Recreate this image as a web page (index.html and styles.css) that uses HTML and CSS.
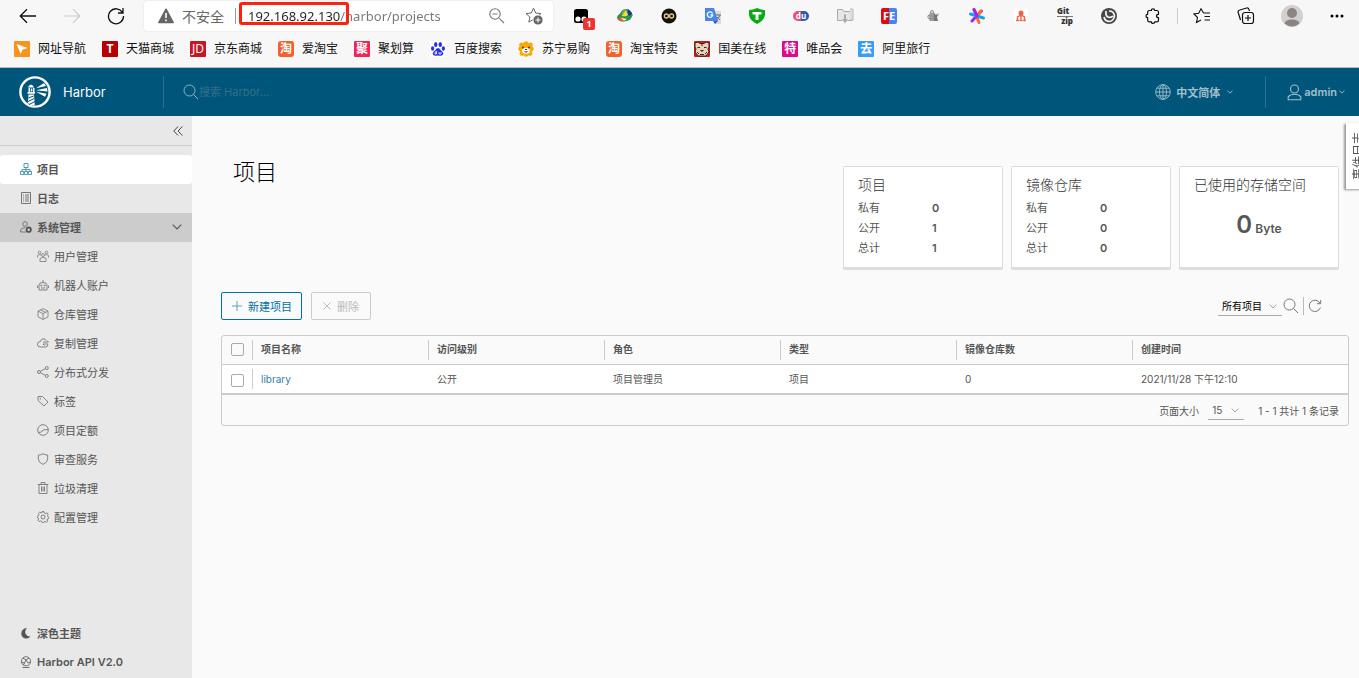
FILE: index.html
```html
<!DOCTYPE html>
<html lang="zh-CN">
<head>
  <meta charset="UTF-8">
  <meta name="viewport" content="width=device-width, initial-scale=1.0">
  <title>Harbor</title>
  <link rel="stylesheet" href="styles.css">
</head>
<body>
  <!-- 浏览器工具栏 -->
  <div class="browser">
    <div class="toolbar">
      <button class="tool" aria-label="后退"><svg width="18" height="16" viewBox="0 0 18 16"><path d="M17 8H1.500M8 1.200L1.200 8L8 14.800" fill="none" stroke="#111" stroke-width="1.300"/></svg></button>
      <button class="tool" aria-label="前进"><svg width="18" height="16" viewBox="0 0 18 16"><path d="M1 8h15.500M10 1.200L16.800 8L10 14.800" fill="none" stroke="#ccc" stroke-width="1.200"/></svg></button>
      <button class="tool" aria-label="刷新"><svg width="18" height="18" viewBox="0 0 18 18"><path d="M15.500 5.500A7.500 7.500 0 1 0 16.500 9M16 1v5h-5" fill="none" stroke="#111" stroke-width="1.300"/></svg></button>
      <div class="address">
        <svg width="16" height="16" viewBox="0 0 16 16"><path d="M8 1.200L15.200 14.500H.8z" fill="#666" stroke="#666" stroke-width="1.500" stroke-linejoin="round"/><path d="M8 5v5M8 11.500v1.800" stroke="#fff" stroke-width="1.600"/></svg>
        <span class="unsafe">不安全</span>
        <div class="url">
          <input class="url_input" type="text" aria-label="地址" value="192.168.92.130/harbor/projects">
          <i class="mark"></i>
        </div>
        <button class="mini" aria-label="缩小"><svg width="16" height="16" viewBox="0 0 16 16"><path d="M10.300 10.300L15 15M3.500 6h5" stroke="#777" stroke-width="1.100"/><circle cx="6" cy="6" r="5.200" fill="none" stroke="#777" stroke-width="1.100"/></svg></button>
        <button class="mini" aria-label="收藏"><svg width="18" height="18" viewBox="0 0 18 18"><path d="M8.500 1.200l2.200 4.800 5.300.6-3.900 3.500 1.100 5-4.700-2.600-4.700 2.600 1.100-5L1 6.600 6.300 6z" fill="none" stroke="#666" stroke-width="1"/><circle cx="13" cy="13" r="5" fill="#666" stroke="#fff" stroke-width=".8"/><path d="M13 10.500v5M10.500 13h5" stroke="#fff" stroke-width="1.100"/></svg></button>
      </div>
      <button class="tool has_badge" aria-label="脚本扩展"><svg width="16" height="16" viewBox="0 0 16 16"><rect x="1" y="1" width="14" height="14" rx="2.500" fill="#000"/><circle cx="5" cy="11" r="2.600" fill="#fff"/><circle cx="11" cy="11" r="2.600" fill="#fff"/></svg><b class="badge">1</b></button>
      <button class="tool" aria-label="下载扩展"><svg width="18" height="18" viewBox="0 0 18 18"><circle cx="10" cy="8" r="6" fill="#2c6fb5"/><path d="M10 2q-5 1-5 7l5 1 1-4z" fill="#6fb53b"/><path d="M10 3l2 5-4 3-2-2z" fill="#f4dc3d"/><path d="M12 2l4 4-2 4-2-3z" fill="#1b3c70"/><path d="M1 11q0-3 4-5l1 3q6 1 11-2-1 5-7 7-7 2-9-3z" fill="#2a9a40"/><path d="M2 12l4-2 3 3q-5 3-7-1z" fill="#e5603a"/><path d="M5 11l6 1-3 1.500z" fill="#fff"/></svg></button>
      <button class="tool" aria-label="无限扩展"><svg width="16" height="16" viewBox="0 0 16 16"><circle cx="8" cy="8" r="7.500" fill="#151310"/><circle cx="5.400" cy="8" r="2" fill="none" stroke="#eac48c" stroke-width="1.300"/><circle cx="10.600" cy="8" r="2" fill="none" stroke="#eac48c" stroke-width="1.300"/></svg></button>
      <button class="tool" aria-label="翻译"><svg width="18" height="18" viewBox="0 0 18 18"><path d="M8 4h9v13H11z" fill="#dadada"/><path d="M1 1h9l4 13H1z" fill="#4787ec"/><path d="M9 14h5l-3 3z" fill="#315eae"/><path d="M8.500 6.500A2.700 2.700 0 1 0 8.700 8H6.500" fill="none" stroke="#fff" stroke-width="1.300"/><path d="M12 8h5M14 7v1M16 8q-1 4-4 5M13 10l3 3" stroke="#627782" fill="none"/></svg></button>
      <button class="tool" aria-label="T 扩展"><svg width="16" height="16" viewBox="0 0 16 16"><path d="M0 2q4 0 8-2 4 2 8 2v5q-1 6-8 9-7-3-8-9z" fill="#0aaa15"/><path d="M3.500 4h9v2.400h-3V12h-3V6.400h-3z" fill="#fff"/></svg></button>
      <button class="tool" aria-label="网盘"><span class="du">du</span></button>
      <button class="tool" aria-label="文件下载"><svg width="18" height="18" viewBox="0 0 18 18"><path d="M1.500 2.500h5l1.500 2h8.500v9h-15z" fill="#e6e6e6" stroke="#aaa"/><path d="M14 2h3v11h-3" fill="#ddd" stroke="#bbb"/><path d="M7.500 7h3v5h2.500l-4 4.500-4-4.500h2.500z" fill="#aaa" stroke="#f5f5f5" stroke-width=".6"/></svg></button>
      <button class="tool" aria-label="前端助手"><span class="fe">FE</span></button>
      <button class="tool" aria-label="茶壶扩展"><svg width="14" height="14" viewBox="0 0 14 14"><path d="M4 3q0-2 2-2t2 2l1 2v7H4L3 8z" fill="#999"/><path d="M8 5l4 1-1 2 1 4H8z" fill="#777"/><path d="M4 6q-3 0-2 2.500t3 2" fill="none" stroke="#888"/><path d="M9 5l4-.5-.5 2z" fill="#aaa"/><circle cx="6" cy="3" r="1" fill="#ddd"/></svg></button>
      <button class="tool" aria-label="星形扩展"><svg width="18" height="18" viewBox="0 0 18 18"><g stroke-width="3" stroke-linecap="round"><path d="M6 2.500L11 15.500" stroke="#ff6b26"/><path d="M13.500 4L4 14" stroke="#a123ef"/><path d="M9 9l4-5" stroke="#ff6b26"/><path d="M2.500 7L15.500 11" stroke="#11a5ee"/><path d="M6 2.500L9 9" stroke="#a123ef"/></g></svg></button>
      <button class="tool" aria-label="结构扩展"><svg width="14" height="14" viewBox="0 0 14 14"><rect width="14" height="14" rx="2" fill="#fff"/><circle cx="7" cy="4" r="2.500" fill="#ee6448"/><path d="M7 5v7M3.500 11V8L7 6l3.500 2v3M2 11.500h3M5.500 11.500h3M9 11.500h3" stroke="#ee6448" fill="none" stroke-width="1.400"/></svg></button>
      <button class="tool gitzip" aria-label="GitZip"><span>Git</span><i></i><span>zip</span></button>
      <button class="tool" aria-label="圆形扩展"><svg width="16" height="16" viewBox="0 0 16 16"><circle cx="8" cy="8" r="8" fill="#474747"/><path d="M5 3q-.5 5 2 6 3 1 5-1M8 3q5 0 5.500 5-.5 4.500-5 5.500Q4 13.500 3 9" fill="none" stroke="#f7f7f7" stroke-width="1.700"/></svg></button>
      <button class="tool" aria-label="扩展"><svg width="16" height="16" viewBox="0 0 16 16"><path d="M4.500 2.500h2q-.2-1.700 1.500-1.700t1.700 1.700h2q1.800 0 1.800 1.800v2q-2 0-2 1.700t2 1.700v2.500q0 1.600-1.800 1.600h-2q0 1.600-1.700 1.600t-1.500-1.600h-2q-1.800 0-1.800-1.600v-2.500Q1 9.700 1 8t1.700-1.700v-2q0-1.800 1.800-1.800z" fill="none" stroke="#111" stroke-width="1.200" stroke-linejoin="round"/></svg></button>
      <i class="tool_line"></i>
      <button class="tool" aria-label="收藏夹"><svg width="18" height="16" viewBox="0 0 18 16"><path d="M10.500 5L8 .8 5.700 5.300 1 6l3.500 3.500-1 5L8 12M10.500 5H17M11.500 8.500H17M11.500 12H17" fill="none" stroke="#111" stroke-width="1.100"/></svg></button>
      <button class="tool" aria-label="集锦"><svg width="18" height="18" viewBox="0 0 18 18"><path d="M3.500 13L1.200 5.500q-.5-2 1.500-2.500l7-2q1.800-.3 2.300 1.500L12.500 4" fill="none" stroke="#111" stroke-width="1.200"/><rect x="5.500" y="5.500" width="11" height="11" rx="2.500" fill="#f7f7f7" stroke="#111" stroke-width="1.200"/><path d="M11 8v6M8 11h6" stroke="#111" stroke-width="1.200"/></svg></button>
      <button class="tool avatar" aria-label="用户"><svg width="22" height="22" viewBox="0 0 22 22"><circle cx="11" cy="11" r="11" fill="#d2d0ce"/><circle cx="11" cy="8" r="5" fill="#8a8583"/><path d="M3.500 18.500q1-4 7.500-4t7.500 4q-7.500 6-15 0z" fill="#8a8583"/></svg></button>
      <button class="tool" aria-label="更多"><svg width="14" height="4" viewBox="0 0 14 4"><circle cx="2" cy="2" r="1.500"/><circle cx="7" cy="2" r="1.500"/><circle cx="12" cy="2" r="1.500"/></svg></button>
    </div>
    <div class="bookmarks">
      <a href="#"><svg width="16" height="16" viewBox="0 0 16 16"><rect width="16" height="16" rx="1" fill="#f7941e"/><path d="M2.500 3l11 4-5 1.800L6.700 13z" fill="#fff"/></svg>网址导航</a>
      <a href="#"><span class="fav tmall">T</span>天猫商城</a>
      <a href="#"><span class="fav jd">JD</span>京东商城</a>
      <a href="#"><span class="fav taobao">淘</span>爱淘宝</a>
      <a href="#"><span class="fav ju">聚</span>聚划算</a>
      <a href="#"><svg width="16" height="16" viewBox="0 0 16 16"><rect width="16" height="16" fill="#fff"/><g fill="#2932e1"><ellipse cx="5.700" cy="3.500" rx="1.700" ry="2.500"/><ellipse cx="10.300" cy="3.500" rx="1.700" ry="2.500"/><ellipse cx="2.600" cy="7.500" rx="1.600" ry="2.200"/><ellipse cx="13.400" cy="7.500" rx="1.600" ry="2.200"/><path d="M8 7q2 0 3 2.500 3 2 2 4-1 2-5 1-4 1-5-1-1-2 2-4Q6 7 8 7z"/></g><path d="M6.500 10v3H5v-2h1.500M9 11v2h2v-2" fill="none" stroke="#fff" stroke-width=".8"/></svg>百度搜索</a>
      <a href="#"><svg width="16" height="16" viewBox="0 0 16 16"><g fill="#f9a90b"><circle cx="8" cy="8" r="6.500"/><circle cx="8" cy="2.700" r="2.400"/><circle cx="3.500" cy="4" r="2.400"/><circle cx="12.500" cy="4" r="2.400"/><circle cx="2.600" cy="8" r="2.400"/><circle cx="13.400" cy="8" r="2.400"/><circle cx="4" cy="12.500" r="2.400"/><circle cx="12" cy="12.500" r="2.400"/><circle cx="8" cy="13.500" r="2.300"/></g><ellipse cx="8" cy="9.700" rx="4" ry="3" fill="#fff"/><circle cx="5" cy="6.500" r=".9" fill="#423011"/><circle cx="11" cy="6.500" r=".9" fill="#423011"/><path d="M7 8.500h2M6.500 10.500q1.500 1.200 3 0" stroke="#423011" fill="none"/></svg>苏宁易购</a>
      <a href="#"><span class="fav taobao">淘</span>淘宝特卖</a>
      <a href="#"><svg width="16" height="16" viewBox="0 0 16 16"><rect width="16" height="16" rx="1" fill="#d7141a"/><path d="M1 2l3-1 2 1.500h4L12 1l3 1v4l-1 2 1 3-3 4H4l-3-4 1-3-1-2z" fill="#e4d3bd" stroke="#41231b"/><path d="M3.500 6.500h2.500M10 6.500h2.500M3 11l2 2M13 11l-2 2M6 13.500h4M7 4h2" fill="none" stroke="#41231b"/><path d="M6 9h4l-2 2z" fill="#41231b"/></svg>国美在线</a>
      <a href="#"><span class="fav te">特</span>唯品会</a>
      <a href="#"><span class="fav qu">去</span>阿里旅行</a>
    </div>
  </div>

  <!-- Harbor 头部 -->
  <header class="header">
    <a class="brand" href="#">
      <svg width="32" height="32" viewBox="0 0 32 32"><circle cx="16" cy="16" r="14.600" fill="none" stroke="#fff" stroke-width="2.400"/><path d="M9 11.500q.5-2 3-3 2.500 1 3 3zM9.500 12H11v4H9.500zM14 12h1.500v4H14zM8.500 16h7.500v1.800H8.500zM9.500 18.500h5.500l.8 10.500q-4 1-7-2z" fill="#fff"/><path d="M11.800 12.500h1.500v3h-1.500z" fill="#fff"/><path d="M9.200 22l5.500-2M9 25.500l6-3M10 28.500l6-3" stroke="#00567a"/><path d="M17 12.300L25 7l2 3zM17 14.200l11-2.200.5 3.500zM17 15.800l10.500 2-1.500 3z" fill="#fff"/></svg>
      <span>Harbor</span>
    </a>
    <form class="search">
      <label for="search"><svg width="16" height="16" viewBox="0 0 16 16"><circle cx="6.500" cy="6.500" r="5.500" fill="none" stroke="#8fb5c7"/><path d="M10.500 10.500L15 15" stroke="#8fb5c7"/></svg></label>
      <input id="search" type="text" placeholder="搜索 Harbor..." aria-label="搜索">
    </form>
    <button class="lang">
      <svg width="16" height="16" viewBox="0 0 16 16"><g fill="none" stroke="#a0bfcd" stroke-width=".9"><circle cx="8" cy="8" r="7.300"/><ellipse cx="8" cy="8" rx="3.500" ry="7.300"/><path d="M8 .7v14.600M.7 8h14.600M2 4.200h12M2 11.800h12"/></g></svg>
      <span>中文简体</span>
      <svg class="arrow" width="6" height="4" viewBox="0 0 6 4"><path d="M.4.500L3 3.200 5.600.5" fill="none" stroke="#a0bfcd" stroke-width=".9"/></svg>
    </button>
    <button class="user">
      <svg width="15" height="17" viewBox="0 0 15 17"><g fill="none" stroke="#a0bfcd" stroke-width="1.100"><circle cx="7.500" cy="5" r="4"/><path d="M1.200 15.800v-3q2-2.600 6.300-2.600t6.300 2.600v3z"/></g></svg>
      <span>admin</span>
      <svg width="6" height="4" viewBox="0 0 6 4"><path d="M.4.500L3 3.200 5.600.5" fill="none" stroke="#a0bfcd" stroke-width=".9"/></svg>
    </button>
  </header>

  <div class="container">
    <!-- 左侧导航 -->
    <nav class="sidebar">
      <div class="collapse">
        <button aria-label="折叠"><svg width="10" height="10" viewBox="0 0 10 10"><path d="M5 .5L.8 5 5 9.500M9.300.5L5.100 5l4.200 4.500" fill="none" stroke="#444"/></svg></button>
      </div>
      <div class="menu">
        <a class="item active" href="#"><svg width="12" height="12" viewBox="0 0 12 12"><path d="M4 .5h4v4H4zM.5 8.500h3.200v3H.5zM8.300 8.500h3.200v3H8.300zM4.400 8.500h3.200v3H4.400zM6 4.500v4M2 8.500v-2h8v2" fill="none" stroke="#3b8eb5" stroke-width=".9"/></svg>项目</a>
        <a class="item" href="#"><svg width="12" height="12" viewBox="0 0 12 12"><path d="M1.500.5h9v11h-9z" fill="none" stroke="#777"/><path d="M3 3h1M5 3h4M3 5h1M5 5h4M3 7h1M5 7h4M3 9h1M5 9h4" stroke="#777"/></svg>日志</a>
        <a class="item open" href="#"><svg width="12" height="12" viewBox="0 0 12 12"><circle cx="5" cy="3" r="2.300" fill="none" stroke="#777"/><path d="M6 11H.7V8.500Q2.200 6.700 5 6.700" fill="none" stroke="#777"/><circle cx="8.700" cy="8.700" r="2.200" fill="none" stroke="#555" stroke-width="1.800"/></svg><span>系统管理</span><svg class="chevron" width="10" height="6" viewBox="0 0 10 6"><path d="M.7.700L5 5 9.300.7" fill="none" stroke="#555" stroke-width="1.100"/></svg></a>
        <div class="submenu">
          <a class="item" href="#"><svg width="12" height="12" viewBox="0 0 12 12"><g fill="none" stroke="#777" stroke-width=".8"><circle cx="6" cy="5" r="1.500"/><circle cx="2.500" cy="2.500" r="1.300"/><circle cx="9.500" cy="2.500" r="1.300"/><path d="M3 11.500v-3q3-2.500 6 0v3zM.5 7.500v-2Q2 4 4 5M11.500 7.500v-2Q10 4 8 5"/></g></svg>用户管理</a>
          <a class="item" href="#"><svg width="12" height="12" viewBox="0 0 12 12"><g fill="none" stroke="#777" stroke-width=".9"><path d="M6 1v2M2 11V6q0-2.500 4-2.500T10 6v5zM.5 6.500v2.500M11.500 6.500v2.500M4 9h4"/><circle cx="4.300" cy="6.500" r=".6"/><circle cx="7.700" cy="6.500" r=".6"/></g></svg>机器人账户</a>
          <a class="item" href="#"><svg width="12" height="12" viewBox="0 0 12 12"><path d="M6 .6l5 2.500v5.800L6 11.400 1 8.900V3.100zM1 3.100l5 2.500 5-2.500M6 5.600v5.800M3.500 1.800l5 2.600" fill="none" stroke="#777" stroke-width=".8"/></svg>仓库管理</a>
          <a class="item" href="#"><svg width="12" height="12" viewBox="0 0 12 12"><path d="M9 3.500Q8.500 1.500 6 1.800 3.800 2 3.500 4.500.5 4.500.5 7.200T3 10h5.500q2.300 0 2.300-2.500M6 5h5.500L10 3.500M11 7H6l1.500 1.500" fill="none" stroke="#777" stroke-width=".9"/></svg>复制管理</a>
          <a class="item" href="#"><svg width="12" height="12" viewBox="0 0 12 12"><g fill="none" stroke="#777" stroke-width=".9"><circle cx="2" cy="6" r="1.500"/><circle cx="9.800" cy="2" r="1.500"/><circle cx="9.800" cy="10" r="1.500"/><path d="M3.400 5.300l5-2.600M3.400 6.700l5 2.600"/></g></svg>分布式分发</a>
          <a class="item" href="#"><svg width="12" height="12" viewBox="0 0 12 12"><path d="M1 1.500h4.500L11 7 7 11 1 5.500z" fill="none" stroke="#777" stroke-width=".9" stroke-linejoin="round"/><circle cx="3.300" cy="3.700" r=".7" fill="#777"/></svg>标签</a>
          <a class="item" href="#"><svg width="12" height="12" viewBox="0 0 12 12"><circle cx="6" cy="6" r="5.300" fill="none" stroke="#777" stroke-width=".9"/><path d="M1 8.500l3.500-.5L6 6l5-.5" fill="none" stroke="#777" stroke-width=".9"/></svg>项目定额</a>
          <a class="item" href="#"><svg width="12" height="12" viewBox="0 0 12 12"><path d="M6 .7q2 1.400 4.700 1.400V6Q10.500 9.500 6 11.400 1.500 9.500 1.300 6V2.100Q4 2.100 6 .7z" fill="none" stroke="#777" stroke-width=".9"/></svg>审查服务</a>
          <a class="item" href="#"><svg width="12" height="12" viewBox="0 0 12 12"><path d="M.7 2.500h10.600M4 2.500v-2h4v2M2 2.500v9h8v-9M4.500 4.500v5M6 4.500v5M7.500 4.500v5" fill="none" stroke="#777" stroke-width=".9"/></svg>垃圾清理</a>
          <a class="item" href="#"><svg width="12" height="12" viewBox="0 0 12 12"><path d="M5 .6h2l.4 1.500 1 .5 1.500-.8 1.300 1.400-.8 1.400.4 1 1 .4v1.500l-1.400.5-.4 1 .7 1.300-1.300 1.200L8 10.300l-.9.300-.5 1H5l-.4-1.300-1-.4-1.500.7-1.200-1.400.7-1.400-.4-1-1-.3V5.100l1.400-.5.4-1-.6-1.300 1.300-1.200 1.400.7 1-.3z" fill="none" stroke="#777" stroke-width=".9"/><circle cx="6" cy="6" r="2" fill="none" stroke="#777" stroke-width=".9"/></svg>配置管理</a>
        </div>
      </div>
      <div class="menu_bottom">
        <button class="item"><svg width="12" height="12" viewBox="0 0 12 12"><path d="M7 1Q3.500 5 6.500 8 8 9.600 10.500 9.500 8.500 12 5.500 11.500 1.500 10.700 1.300 6.500 1.500 1.500 7 1z" fill="#555"/></svg>深色主题</button>
        <a class="item" href="#"><svg width="12" height="12" viewBox="0 0 12 12"><g fill="none" stroke="#666" stroke-width=".9"><circle cx="6" cy="5.300" r="4.600"/><path d="M3 2l3 2 3-2M1.500 6l3 1 1.500-3 2 3 2.500-1M4.500 7l-1 2M2.500 11.500h7"/></g></svg>Harbor API V2.0</a>
      </div>
    </nav>

    <!-- 内容区 -->
    <main class="content">
      <div class="top">
        <h2>项目</h2>
        <div class="cards">
          <div class="card">
            <h3>项目</h3>
            <dl>
              <dt>私有</dt><dd>0</dd>
              <dt>公开</dt><dd>1</dd>
              <dt>总计</dt><dd>1</dd>
            </dl>
          </div>
          <div class="card">
            <h3>镜像仓库</h3>
            <dl>
              <dt>私有</dt><dd>0</dd>
              <dt>公开</dt><dd>0</dd>
              <dt>总计</dt><dd>0</dd>
            </dl>
          </div>
          <div class="card">
            <h3>已使用的存储空间</h3>
            <p class="storage"><b>0</b> Byte</p>
          </div>
        </div>
      </div>

      <div class="actions">
        <button class="btn"><svg width="10" height="10" viewBox="0 0 10 10"><path d="M5 0v10M0 5h10" stroke="#5ba3c3"/></svg>新建项目</button>
        <button class="btn" disabled><svg width="8" height="8" viewBox="0 0 8 8"><path d="M.5.500l7 7M7.500.5l-7 7" stroke="#bbb"/></svg>删除</button>
        <div class="filter">
          <div class="select">
            <select aria-label="项目类型"><option>所有项目</option></select>
            <svg width="8" height="5" viewBox="0 0 8 5"><path d="M.7.600L4 4 7.300.6" fill="none" stroke="#999" stroke-width=".9"/></svg>
          </div>
          <button class="icon_btn" aria-label="搜索项目"><svg width="16" height="16" viewBox="0 0 16 16"><circle cx="6.500" cy="6.500" r="5.500" fill="none" stroke="#777"/><path d="M10.500 10.500L15 15" stroke="#777"/></svg></button>
          <button class="icon_btn refresh" aria-label="刷新列表"><svg width="14" height="14" viewBox="0 0 14 14"><path d="M12 4.200A5.700 5.700 0 1 0 12.400 8.500M12.700 1v3.700H9" fill="none" stroke="#777"/></svg></button>
        </div>
      </div>

      <div class="datagrid">
        <table>
          <thead>
            <tr>
              <th class="check"><input type="checkbox" aria-label="全选"></th>
              <th><div>项目名称</div></th>
              <th><div>访问级别</div></th>
              <th><div>角色</div></th>
              <th><div>类型</div></th>
              <th><div>镜像仓库数</div></th>
              <th class="last"><div>创建时间</div></th>
            </tr>
          </thead>
          <tbody>
            <tr>
              <td class="check"><input type="checkbox" aria-label="选择 library"></td>
              <td class="name"><div><a href="#">library</a></div></td>
              <td>公开</td>
              <td>项目管理员</td>
              <td>项目</td>
              <td>0</td>
              <td>2021/11/28 下午12:10</td>
            </tr>
          </tbody>
        </table>
        <div class="pagination">
          <label for="size">页面大小</label>
          <div class="select size">
            <select id="size"><option>15</option></select>
            <svg width="8" height="5" viewBox="0 0 8 5"><path d="M.7.600L4 4 7.300.6" fill="none" stroke="#999" stroke-width=".9"/></svg>
          </div>
          <span>1 - 1 共计 1 条记录</span>
        </div>
      </div>
    </main>
    <button class="event_tab">事件日志</button>
  </div>
</body>
</html>
```
FILE: styles.css
```css
*{
  margin: 0;
  padding: 0;
  box-sizing: border-box;
}
body{
  display: flex;
  flex-direction: column;
  height: 100vh;
  overflow: hidden;
  background-color: #fafafa;
  color: #565656;
  font-family: Inter, "Noto Sans CJK SC", sans-serif;
  font-size: 11px;
}
a{
  color: inherit;
  text-decoration: none;
}
button,input,select{
  border: 0;
  outline: none;
  background: none;
  color: inherit;
  font: inherit;
}
i{
  font-style: normal;
}
svg{
  display: block;
  flex-shrink: 0;
}

/* 浏览器工具栏 */
.browser{
  flex-shrink: 0;
  height: 68px;
  border-bottom: 1px solid #b8bcc0;
  background-color: #f7f7f7;
  font-family: "Noto Sans", "Noto Sans CJK SC", sans-serif;
}
.toolbar{
  display: flex;
  align-items: center;
  height: 32px;
  padding-left: 6px;
}
.tool{
  display: flex;
  flex: 0 0 44px;
  align-items: center;
  justify-content: center;
  height: 32px;
}
.avatar{
  flex-basis: 47px;
}
.has_badge{
  position: relative;
}
.badge{
  position: absolute;
  left: 24px;
  top: 18px;
  width: 12px;
  height: 12px;
  border-radius: 2px;
  background-color: #e33;
  color: #fff;
  font-size: 9px;
  line-height: 12px;
}
.tool_line{
  width: 1px;
  height: 16px;
  margin: 0 2px;
  background-color: #ccc;
}
.du{
  width: 16px;
  border-radius: 5px;
  background: linear-gradient(to right, #ec4c74 50%, #2760ae 50%);
  color: #fff;
  font-size: 8px;
  font-weight: 700;
  line-height: 10px;
}
.fe{
  width: 16px;
  border-radius: 2px;
  background: linear-gradient(to right, #e20b0b 50%, #4385f5 50%);
  color: #fff;
  font-size: 11px;
  font-weight: 700;
  line-height: 16px;
}
.gitzip{
  flex-direction: column;
  align-items: stretch;
  padding: 0 14px;
  color: #333;
  font-family: "Open Sans", sans-serif;
  font-size: 8px;
  font-weight: 800;
  line-height: 8px;
}
.gitzip span:first-child{
  text-align: left;
}
.gitzip span:last-child{
  text-align: right;
}
.gitzip i{
  height: 1px;
  margin-top: 1px;
  background-color: #777;
}
.address{
  display: flex;
  flex: 1;
  align-items: center;
  height: 30px;
  margin: 0 6px;
  padding: 0 10px 0 14px;
  border-radius: 4px;
  background-color: #fff;
  box-shadow: 0 0 2px #ddd;
}
.unsafe{
  margin: 0 11px 0 8px;
  color: #666;
  font-size: 14px;
  white-space: nowrap;
}
.url{
  position: relative;
  flex: 1;
  border-left: 1px solid #999;
}
/* 主机名深色，路径灰色 */
.url_input{
  display: block;
  width: 100%;
  height: 16px;
  padding-left: 12px;
  background: linear-gradient(to right, #222 104px, #777 104px);
  background-clip: text;
  -webkit-text-fill-color: transparent;
  color: #555;
  font-size: 13px;
}
.mark{
  position: absolute;
  left: 3px;
  top: -6px;
  width: 110px;
  height: 23px;
  border: 3px solid #ff2010;
  border-radius: 3px;
}
.mini{
  margin-left: 20px;
}
.bookmarks{
  display: flex;
  gap: 16px;
  padding: 8px 14px;
  color: #111;
  font-size: 12px;
  line-height: 18px;
}
.bookmarks a{
  display: flex;
  align-items: center;
  gap: 8px;
  white-space: nowrap;
}
.fav{
  width: 16px;
  height: 16px;
  border-radius: 1px;
  color: #fff;
  font-size: 12px;
  font-weight: 700;
  line-height: 16px;
  text-align: center;
}
.tmall{
  background-color: #b80000;
}
.jd{
  background-color: #c91623;
  font-weight: 400;
}
.taobao{
  border-radius: 3px;
  background-color: #f4602a;
}
.ju{
  background-color: #f02458;
}
.te{
  background-color: #dd0b8c;
}
.qu{
  background-color: #3b9cf5;
}

/* Harbor 头部 */
.header{
  display: flex;
  flex-shrink: 0;
  align-items: center;
  height: 48px;
  background-color: #00567a;
  color: #a0bfcd;
}
.brand{
  display: flex;
  align-items: center;
  gap: 12px;
  width: 163px;
  padding-left: 19px;
  color: #fafafa;
  font-size: 13px;
}
.search{
  display: flex;
  flex: 1;
  align-items: center;
  height: 32px;
  padding-left: 19px;
  border-left: 1px solid #2b7290;
}
.search input{
  width: 200px;
  font-size: 11px;
}
.search input::placeholder{
  color: #326e89;
}
.lang,.user{
  display: flex;
  align-items: center;
  height: 32px;
  font-weight: 600;
}
.lang{
  gap: 5px;
  padding-right: 32px;
}
.lang .arrow{
  margin-left: 2px;
}
.user{
  gap: 2px;
  padding: 0 14px 0 21px;
  border-left: 1px solid #2b7290;
}

.container{
  position: relative;
  display: flex;
  flex: 1;
  min-height: 0;
}
/* 左侧导航 */
.sidebar{
  display: flex;
  flex: 0 0 192px;
  flex-direction: column;
  background-color: #e8e8e8;
}
.collapse{
  display: flex;
  justify-content: flex-end;
  height: 30px;
  padding-right: 9px;
  border-bottom: 1px solid #ccc;
}
.menu{
  margin-top: 9px;
}
.item{
  display: flex;
  align-items: center;
  gap: 5px;
  width: 100%;
  height: 29px;
  padding: 0 0 2px 20px;
  font-weight: 600;
}
.item.active{
  border-radius: 3px;
  background-color: #fff;
}
.item.open{
  background-color: #ccc;
}
.item .chevron{
  margin: 0 10px 0 auto;
}
.submenu .item{
  padding-left: 37px;
  font-weight: 400;
}
.menu_bottom{
  margin-top: auto;
  padding-bottom: 1px;
}

/* 内容区 */
.content{
  flex: 1;
  padding: 50px 10px 0 29px;
}
.top{
  display: flex;
  justify-content: space-between;
  padding: 0 10px 0 12px;
}
.top h2{
  margin-top: -10px;
  color: #000;
  font-size: 22px;
  font-weight: 300;
  line-height: 32px;
}
.cards{
  display: flex;
  gap: 8px;
}
.card{
  width: 160px;
  height: 104px;
  padding: 8px 14px;
  border: 1px solid #ddd;
  border-bottom-width: 3px;
  border-radius: 2px;
  background-color: #fff;
}
.card h3{
  color: #333;
  font-size: 14px;
  font-weight: 300;
  line-height: 20px;
  white-space: nowrap;
}
.card dl{
  display: grid;
  grid-template-columns: 74px 1fr;
  margin-top: 3px;
  line-height: 20px;
}
.card dd{
  font-weight: 600;
}
.storage{
  margin-top: 14px;
  font-size: 12px;
  font-weight: 600;
  line-height: 32px;
  text-align: center;
}
.storage b{
  font-size: 24px;
  font-weight: 600;
}
.actions{
  display: flex;
  align-items: center;
  gap: 9px;
  margin-top: 22px;
}
.btn{
  display: flex;
  align-items: center;
  gap: 6px;
  height: 28px;
  padding: 0 9px 0 10px;
  border: 1px solid #0072a3;
  border-radius: 2px;
  color: #0072a3;
}
.btn:disabled{
  padding: 0 11px;
  border-color: #ccc;
  color: #bbb;
}
.filter{
  display: flex;
  align-items: center;
  margin-left: auto;
  padding-right: 27px;
}
.select{
  position: relative;
  border-bottom: 1px solid #aaa;
}
.select select{
  display: block;
  width: 64px;
  height: 18px;
  padding-left: 4px;
  appearance: none;
  color: #000;
  font-size: 10px;
}
.select svg{
  position: absolute;
  right: 5px;
  top: 7px;
}
.icon_btn{
  margin: 0 4px 0 1px;
}
.refresh{
  margin: 0;
  padding: 2px 0 2px 4px;
  border-left: 1px solid #bbb;
}

/* 表格 */
.datagrid{
  margin-top: 15px;
  border: 1px solid #ccc;
  border-radius: 3px;
  font-size: 10px;
}
table{
  width: 100%;
  border-collapse: collapse;
  table-layout: fixed;
}
th,td{
  width: 176px;
  height: 30px;
  padding: 0 0 0 9px;
  text-align: left;
}
th{
  height: 28px;
  padding-left: 0;
  font-weight: 600;
}
th div{
  height: 20px;
  padding-left: 8px;
  border-left: 1px solid #ccc;
  line-height: 18px;
}
tbody{
  border-top: 1px solid #ccc;
  border-bottom: 2px solid #ccc;
  background-color: #fff;
}
.check{
  width: 30px;
  padding: 0 0 0 9px;
}
td.check{
  padding-top: 3px;
}
.last{
  width: auto;
}
.name{
  padding: 0;
  color: #3580a5;
}
.name div{
  height: 20px;
  padding-left: 8px;
  border-left: 1px solid #ccc;
  line-height: 20px;
}
.check input{
  display: block;
  width: 13px;
  height: 13px;
  border: 1px solid #aaa;
  border-radius: 2px;
  appearance: none;
}
.pagination{
  display: flex;
  align-items: center;
  justify-content: flex-end;
  height: 30px;
  padding-right: 9px;
}
.size{
  margin: 0 14px 0 9px;
}
.size select{
  width: 36px;
  color: #565656;
}

/* 右侧事件日志标签 */
.event_tab{
  position: absolute;
  right: -12px;
  top: 7px;
  width: 25px;
  height: 66px;
  background-color: #fff;
  box-shadow: 2px -1px 2px #999;
  font-size: 12px;
  line-height: 12px;
  writing-mode: vertical-rl;
  text-orientation: sideways;
  transform: rotate(180deg);
}
```
